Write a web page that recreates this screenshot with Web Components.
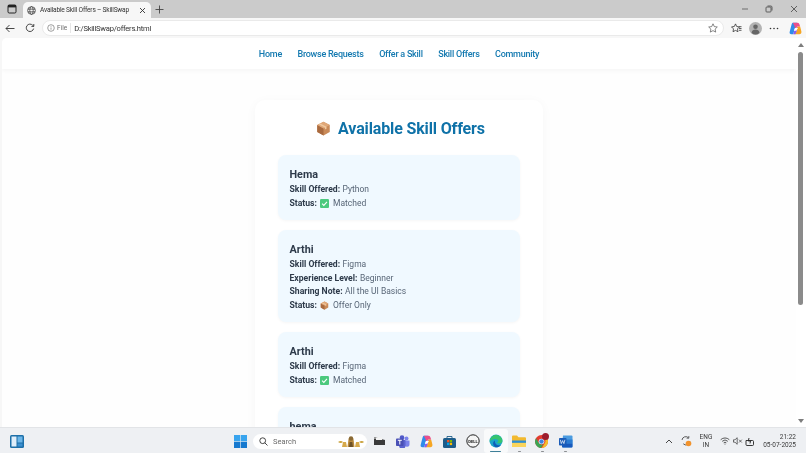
<!DOCTYPE html>
<html lang="en">
<head>
<meta charset="utf-8">
<title>Available Skill Offers – SkillSwap</title>
<style>
  html, body { margin: 0; height: 100%; overflow: hidden; }
  body { font-family: Roboto, "Noto Sans", sans-serif; background: #f8f8f8; }
  browser-window { height: 453px; filter: blur(.3px); }
</style>
</head>
<body>

<template id="tabstrip-tpl">
  <style>
    :host { display: flex; align-items: flex-end; height: 18px; background: #cbcbcb; color: #2b2b2b; font-family: Roboto, sans-serif; }
    .btn { display: flex; align-items: center; justify-content: center; align-self: stretch; }
    .tabs-btn { width: 23px; }
    .tab { display: flex; align-items: center; width: 128px; height: 16px; box-sizing: border-box; padding: 0 5px 0 3px; background: #f7f7f7; border-radius: 5px 5px 0 0; }
    .tab .globe { margin: 0 4px 0 1px; flex: none; }
    .tab span { flex: 1; font-size: 6.600px; letter-spacing: -.2px; white-space: nowrap; overflow: hidden; color: #333; }
    .plus { width: 16px; margin-left: 0; }
    .spacer { flex: 1; }
    .ctl { width: 24.500px; }
  </style>
  <div class="btn tabs-btn">
    <svg width="10" height="10" viewBox="0 0 10 10"><rect x="1" y="1" width="8" height="8" rx="1.200" fill="#cbcbcb" stroke="#222" stroke-width="1"/><rect x="1" y="1" width="8" height="2.400" fill="#222"/></svg>
  </div>
  <div class="tab">
    <svg class="globe" width="9" height="9" viewBox="0 0 10 10" fill="none" stroke="#333" stroke-width=".8"><circle cx="5" cy="5" r="4.300"/><ellipse cx="5" cy="5" rx="1.900" ry="4.300"/><path d="M.9 3.500h8.200M.9 6.500h8.200"/></svg>
    <span><slot></slot></span>
    <svg width="7" height="7" viewBox="0 0 7 7" stroke="#333" stroke-width=".9"><path d="M1 1l5 5M6 1L1 6"/></svg>
  </div>
  <div class="btn plus">
    <svg width="9" height="9" viewBox="0 0 9 9" stroke="#444" stroke-width=".9"><path d="M4.500 .5v8M.5 4.500h8"/></svg>
  </div>
  <div class="spacer"></div>
  <div class="btn ctl"><svg width="8" height="8" viewBox="0 0 8 8" stroke="#555" stroke-width=".8"><path d="M1 4h6"/></svg></div>
  <div class="btn ctl"><svg width="8" height="8" viewBox="0 0 8 8" fill="none" stroke="#444" stroke-width=".8"><rect x="1" y="2" width="5" height="5" rx=".8"/><path d="M2.500 1h3.300a1.200 1.200 0 0 1 1.200 1.200v3.300"/></svg></div>
  <div class="btn ctl"><svg width="8" height="8" viewBox="0 0 8 8" stroke="#444" stroke-width=".8"><path d="M1 1l6 6M7 1L1 7"/></svg></div>
</template>

<template id="toolbar-tpl">
  <style>
    :host { display: flex; align-items: center; height: 20px; background: #f7f7f7; font-family: Roboto, sans-serif; }
    .ic { display: flex; justify-content: center; align-items: center; flex: none; }
    .back { width: 20px; }
    .reload { width: 19px; }
    .omni { flex: none; width: 682px; height: 16px; margin-left: 3px; box-sizing: border-box; display: flex; align-items: center; padding: 0 5px 0 4px; background: #fff; border: 1px solid #eaeaea; border-radius: 8px; }
    .file { display: flex; align-items: center; gap: 2px; font-size: 6.500px; color: #6d6d6d; }
    .sep { width: 1px; height: 10px; background: #e6e6e6; margin: 0 3px 0 3px; }
    .url { flex: 1; font-size: 7.600px; letter-spacing: -.25px; color: #333; white-space: nowrap; }
    .fav { width: 25px; }
    .prof { width: 13px; }
    .more { width: 24px; }
    .cop { width: 18px; }
  </style>
  <div class="ic back"><svg width="10" height="9" viewBox="0 0 10 9" fill="none" stroke="#333" stroke-width=".9"><path d="M9.500 4.500H1M4.500 1L1 4.500 4.500 8"/></svg></div>
  <div class="ic reload"><svg width="10" height="10" viewBox="0 0 10 10" fill="none" stroke="#333" stroke-width=".9"><path d="M8.600 5.600A3.700 3.700 0 1 1 7.700 2.300L8.800 3.400M8.800 1v2.400H6.400"/></svg></div>
  <div class="omni">
    <div class="file">
      <svg width="8" height="8" viewBox="0 0 8 8" fill="none" stroke="#777" stroke-width=".7"><circle cx="4" cy="4" r="3.300"/><path d="M4 3.500v2.200M4 2.200v.7"/></svg>
      <span>File</span>
    </div>
    <div class="sep"></div>
    <div class="url"><slot></slot></div>
    <svg width="10" height="10" viewBox="0 0 10 10" fill="none" stroke="#555" stroke-width=".7"><path d="M5 .8l1.300 2.800 3 .4-2.200 2.100.6 3L5 7.600 2.300 9.100l.6-3L.7 4l3-.4z"/></svg>
  </div>
  <div class="ic fav"><svg width="11" height="10" viewBox="0 0 11 10" fill="none" stroke="#333" stroke-width=".8"><path d="M4.500 .9l1.200 2.600 2.800.4-2 2 .5 2.800L4.500 7.400 2 8.700l.5-2.800-2-2 2.800-.4z"/><path d="M8 5.500h2.500M8 7.300h2.500M8 3.700h2.500"/></svg></div>
  <div class="ic prof"><svg width="13" height="13" viewBox="0 0 13 13"><circle cx="6.500" cy="6.500" r="6.500" fill="#b3b3b3"/><circle cx="6.500" cy="4.800" r="2.300" fill="#666"/><path d="M2.500 11c.4-2.400 2-3.400 4-3.400s3.600 1 4 3.400a6.500 6.500 0 0 1-8 0z" fill="#666"/></svg></div>
  <div class="ic more"><svg width="10" height="3" viewBox="0 0 10 3" fill="#333"><circle cx="1.500" cy="1.500" r=".8"/><circle cx="5" cy="1.500" r=".8"/><circle cx="8.500" cy="1.500" r=".8"/></svg></div>
  <div class="ic cop"><copilot-mark size="13"></copilot-mark></div>
</template>

<template id="copilot-tpl">
  <style>:host { display: inline-flex; } svg { display: block; }</style>
  <svg viewBox="0 0 13 13">
    <path d="M3.800 .8H8L5.400 8.200 4.200 12.200H2.400Q.1 12.200.7 9.800L2.600 2.600Q3 .8 3.800 .8z" fill="#2f8bea"/>
    <path d="M3.800 .8h5q1.200 0 1.700 1.600l.7 2.300-2.900-.3-2.300 2.300-.4-2.500z" fill="#ec4f8b"/>
    <path d="M8.300 4.400l2.900.3 1.200 4.800q.3 2.700-2.200 2.700H5.200l2-2.300z" fill="#f6a623"/>
    <path d="M4.200 12.200l1.400-4.400 2.700-3.300-.5 4.500-1.500 3.200z" fill="#8a5cf0"/>
    <path d="M5.900 5.900h3.100L7.300 8.700H4.800z" fill="#fff"/>
  </svg>
</template>

<template id="site-nav-tpl">
  <style>
    :host { display: flex; justify-content: center; gap: 15.500px; height: 31px; align-items: center; background: #fff; box-shadow: 0 2px 4px rgba(0,0,0,.035); position: relative; font-family: Roboto, sans-serif; }
    ::slotted(a) { color: #1379b0; font-size: 9px; letter-spacing: -.25px; font-weight: 500; text-decoration: none; }
  </style>
  <slot></slot>
</template>

<template id="offer-list-tpl">
  <style>
    :host { display: block; box-sizing: border-box; width: 288px; margin: 31px auto 0; padding: 17px 23px 0; background: #fff; border-radius: 10px; box-shadow: 0 2px 12px rgba(0,0,0,.035); }
    h1 { display: flex; justify-content: center; align-items: center; gap: 7px; margin: 0 0 16px; padding-left: 3px; height: 22px; font-size: 16px; letter-spacing: -.14px; font-weight: 700; color: #0f72a8; white-space: nowrap; }
    .cards { display: flex; flex-direction: column; gap: 10px; }
  </style>
  <h1><skill-icon kind="box" size="15"></skill-icon><span><slot name="title"></slot></span></h1>
  <div class="cards"><slot></slot></div>
</template>

<template id="offer-card-tpl">
  <style>
    :host { display: block; padding: 11.500px 12px 10px 11.500px; background: #f0f9ff; border-radius: 8px; box-shadow: 0 1px 3px rgba(0,0,0,.04); font-family: Roboto, sans-serif; color: #586677; font-size: 8.500px; line-height: 13.500px; }
    h3 { margin: 0 0 1.500px; font-size: 10.800px; line-height: 15px; font-weight: 700; color: #2d3a4a; }
  </style>
  <h3></h3>
  <slot></slot>
</template>

<template id="offer-field-tpl">
  <style>
    :host { display: flex; align-items: center; height: 13.500px; white-space: nowrap; }
    b { color: #2d3a4a; font-size: 8.650px; font-weight: 700; margin-right: 2.500px; }
    ::slotted(skill-icon) { margin: 0 4px 0 .5px; }
  </style>
  <b></b><slot></slot>
</template>

<template id="taskbar-tpl">
  <style>
    :host { display: grid; grid-template-columns: 1fr auto 1fr; align-items: center; height: 26px; padding-top: 1px; background: #eef0f3; border-top: 1px solid #e2e4e7; box-sizing: border-box; font-family: Roboto, sans-serif; }
    .left { padding-left: 10px; display: flex; }
    .mid { display: flex; align-items: center; }
    .right { justify-self: end; }
    .s { width: 23.250px; height: 24px; display: flex; justify-content: center; align-items: center; position: relative; flex: none; box-sizing: border-box; }
    .s.active { background: #f9fafb; border-radius: 3px; }
    .s.active::after { content: ""; position: absolute; bottom: 1px; left: 6px; width: 11px; height: 1.500px; background: #3e7f98; border-radius: 1px; }
    .s.open::after { content: ""; position: absolute; bottom: 1px; left: 10px; width: 3px; height: 1.500px; background: #8d8f92; border-radius: 1px; }
    .search { width: 114px; height: 15px; margin: 0 1px; box-sizing: border-box; display: flex; align-items: center; gap: 5px; padding: 0 2px 0 6px; border-radius: 8px; background: #fff; color: #6b6b6b; font-size: 7.500px; flex: none; }
    .search span { flex: 1; }
  </style>
  <div class="left">
    <svg width="14" height="13" viewBox="0 0 14 13"><rect width="14" height="13" rx="1.500" fill="#1d6fa8"/><rect x="1.500" y="1.500" width="5" height="10" fill="#dfeefa"/><rect x="7.500" y="1.500" width="5" height="6" fill="#6db6e8"/><rect x="7.500" y="8.500" width="5" height="3" fill="#3b8fd0"/></svg>
  </div>
  <div class="mid">
    <div class="s"><svg width="13" height="13" viewBox="0 0 13 13"><rect width="6.200" height="6.200" fill="#38a4ee"/><rect x="6.800" width="6.200" height="6.200" fill="#38a4ee"/><rect y="6.800" width="6.200" height="6.200" fill="#1679cf"/><rect x="6.800" y="6.800" width="6.200" height="6.200" fill="#1679cf"/></svg></div>
    <div class="search">
      <svg width="9" height="9" viewBox="0 0 9 9" fill="none" stroke="#333" stroke-width=".9"><circle cx="3.700" cy="3.700" r="2.900"/><path d="M5.800 5.800l2.700 2.700"/></svg>
      <span>Search</span>
      <svg width="28" height="13" viewBox="0 0 28 13">
        <path d="M1 7q3-2 5 0-2 2-5 0zM22 7q3-2 5 0-2 2-5 0z" fill="#c9a13a"/>
        <path d="M5 12l1-5h3l1 5zM18 12l1-5h3l1 5z" fill="#d6a94a"/>
        <path d="M10.500 12l1-8q2.500-4 5 0l1 8z" fill="#b98a3c"/>
        <circle cx="14" cy="3.500" r="2.200" fill="#8a6a35"/>
        <path d="M12 12l.7-5h2.600l.7 5z" fill="#6e5228"/>
      </svg>
    </div>
    <div class="s"><svg width="11" height="10" viewBox="0 0 11 10"><path d="M0 3h7l4 1v5H0z" fill="#3a3a3a"/><path d="M0 1h3l1 2H0z" fill="#9a9a9a"/><rect x="2" y="1.500" width="6" height="2.500" fill="#f3f3f3"/></svg></div>
    <div class="s"><svg width="14" height="13" viewBox="0 0 14 13"><circle cx="10.500" cy="3.500" r="2" fill="#7b83eb"/><circle cx="6" cy="2.600" r="2.300" fill="#5059c9"/><path d="M8 5.500h5.500v3.500a2.500 2.500 0 0 1-5 .5z" fill="#7b83eb"/><path d="M2.500 5h7v5.500a3.200 3.200 0 0 1-6.400.2z" fill="#5b63cf"/><rect y="3.500" width="7.500" height="7.500" rx=".8" fill="#4a50b5"/><path d="M1.800 5.300h4M3.800 5.300v4.200" stroke="#fff" stroke-width="1" fill="none"/></svg></div>
    <div class="s"><copilot-mark size="13"></copilot-mark></div>
    <div class="s"><svg width="13" height="13" viewBox="0 0 13 13"><path d="M4 3V1.500h5V3" fill="none" stroke="#1e5f8a" stroke-width=".9"/><rect y="3" width="13" height="10" rx="1.500" fill="#1d5c8a"/><rect x="4" y="5" width="2.300" height="2.300" fill="#f25022"/><rect x="6.800" y="5" width="2.300" height="2.300" fill="#7fba00"/><rect x="4" y="7.800" width="2.300" height="2.300" fill="#00a4ef"/><rect x="6.800" y="7.800" width="2.300" height="2.300" fill="#ffb900"/></svg></div>
    <div class="s"><svg width="14" height="14" viewBox="0 0 14 14"><circle cx="7" cy="7" r="6.200" fill="#f4f4f4" stroke="#222" stroke-width="1"/><text x="7" y="8.500" text-anchor="middle" font-size="4.200" font-weight="700" fill="#222" font-family="Roboto, sans-serif">DELL</text></svg></div>
    <div class="s active"><svg width="14" height="14" viewBox="0 0 14 14"><circle cx="7" cy="7" r="6.500" fill="#1aa5c9"/><path d="M.6 7.800C1 3.500 4 1 7 1c3.500 0 6.300 2.500 6.400 6 0 1.500-1.400 2.300-3.200 2.300-1.300 0-2-.4-2.200-.9 1.500-.3 1.700-1.700.4-2.800C6.500 4.300 3.200 4.600.6 7.800z" fill="#36c46f"/><path d="M6 12.900C3.500 11 3.500 7.500 6 6.500c-.7 2.800 1.700 5.500 5.800 4.700C10 13.200 8 13.600 6 12.900z" fill="#0d5fb8"/></svg></div>
    <div class="s open"><svg width="14" height="12" viewBox="0 0 14 12"><path d="M0 1.500A1 1 0 0 1 1 .5h4l1.500 1.700H13a1 1 0 0 1 1 1V11a1 1 0 0 1-1 1H1a1 1 0 0 1-1-1z" fill="#f2b92f"/><rect y="5.500" width="14" height="2.400" fill="#2a8fd8"/><rect y="7.900" width="14" height="4.100" fill="#fad45b"/></svg></div>
    <div class="s open"><svg width="16" height="16" viewBox="0 0 16 16"><circle cx="7.500" cy="8.500" r="6.500" fill="#e33b2e"/><path d="M13.400 5.700A6.500 6.500 0 0 1 7.800 15l3-5a3.300 3.300 0 0 0-.5-4.300z" fill="#f6c029"/><path d="M7 15A6.500 6.500 0 0 1 2 5.200l3 5.100A3.300 3.300 0 0 0 9.300 11z" fill="#3aa655"/><circle cx="7.500" cy="8.500" r="2.800" fill="#fff"/><circle cx="7.500" cy="8.500" r="2.200" fill="#3b82e0"/><circle cx="11.500" cy="3.500" r="3.500" fill="#9c1c2e"/></svg></div>
    <div class="s open"><svg width="14" height="13" viewBox="0 0 14 13"><path d="M4 .5h8.500a1 1 0 0 1 1 1v10a1 1 0 0 1-1 1H4a1 1 0 0 1-1-1z" fill="#4a9be0"/><path d="M3 4.500h10.500v4H3z" fill="#2b7cd3"/><path d="M3 8.500h10.500v3a1 1 0 0 1-1 1H4a1 1 0 0 1-1-1z" fill="#185abd"/><rect y="3" width="7.500" height="7.500" rx=".8" fill="#1a5cb8"/><path d="M1.300 4.800l1 3.800 1.300-3 1.300 3 1-3.800" fill="none" stroke="#fff" stroke-width=".7"/></svg></div>
  </div>
  <div class="right"><slot></slot></div>
</template>

<template id="system-tray-tpl">
  <style>
    :host { display: flex; align-items: center; padding-right: 10px; color: #3a3a3a; font-family: Roboto, sans-serif; font-size: 6.500px; line-height: 8.500px; }
    .i { display: flex; justify-content: center; align-items: center; flex: none; }
    .lang { text-align: center; width: 20px; margin: 0 2px 0 0; }
    .clock { text-align: right; width: 36px; margin-left: 4px; }
  </style>
  <div class="i" style="width:17px"><svg width="8" height="5" viewBox="0 0 8 5" fill="none" stroke="#333" stroke-width=".9"><path d="M1 4l3-3 3 3"/></svg></div>
  <div class="i" style="width:17px;margin-right:2px"><svg width="12" height="12" viewBox="0 0 12 12" fill="none"><path d="M2 5a3.800 3.800 0 0 1 6.500-2.200M9.800 6A3.800 3.800 0 0 1 3.300 8.800" stroke="#4a4a4a" stroke-width=".9"/><path d="M8.800 1v2.200H6.600" stroke="#4a4a4a" stroke-width=".8"/><circle cx="8.500" cy="8.500" r="2.800" fill="#f2932c"/></svg></div>
  <div class="lang">ENG<br>IN</div>
  <div class="i" style="width:13px"><svg width="10" height="8" viewBox="0 0 10 8" fill="none" stroke="#333" stroke-width=".8"><path d="M.7 2.700a6.200 6.200 0 0 1 8.600 0M2.200 4.300a4 4 0 0 1 5.600 0M3.700 5.800a1.900 1.900 0 0 1 2.600 0"/><circle cx="5" cy="7.100" r=".5" fill="#333" stroke="none"/></svg></div>
  <div class="i" style="width:13px"><svg width="10" height="8" viewBox="0 0 10 8"><path d="M.5 2.800h1.500L4.200.7v6.600L2 5.200H.5z" fill="none" stroke="#333" stroke-width=".7"/><path d="M6 2.700l2.800 2.800M8.800 2.700L6 5.500" stroke="#333" stroke-width=".7"/></svg></div>
  <div class="i" style="width:12px"><svg width="10" height="9" viewBox="0 0 10 9"><path d="M1 3.500h6.500a1 1 0 0 1 1 1v3a1 1 0 0 1-1 1H2a1 1 0 0 1-1-1z" fill="none" stroke="#222" stroke-width=".9"/><path d="M4 1l-.7 3h2.200L5 6.500" fill="none" stroke="#222" stroke-width=".9"/></svg></div>
  <div class="clock"><slot></slot></div>
</template>

<browser-window>
  <tab-strip slot="chrome">Available Skill Offers – SkillSwap</tab-strip>
  <url-toolbar slot="chrome">D:/SkillSwap/offers.html</url-toolbar>

  <site-nav>
    <a href="#">Home</a>
    <a href="#">Browse Requests</a>
    <a href="#">Offer a Skill</a>
    <a href="#">Skill Offers</a>
    <a href="#">Community</a>
  </site-nav>

  <offer-list>
    <span slot="title">Available Skill Offers</span>

    <offer-card name="Hema">
      <offer-field label="Skill Offered:">Python</offer-field>
      <offer-field label="Status:"><skill-icon kind="check" size="9"></skill-icon>Matched</offer-field>
    </offer-card>

    <offer-card name="Arthi">
      <offer-field label="Skill Offered:">Figma</offer-field>
      <offer-field label="Experience Level:">Beginner</offer-field>
      <offer-field label="Sharing Note:">All the UI Basics</offer-field>
      <offer-field label="Status:"><skill-icon kind="box" size="9"></skill-icon>Offer Only</offer-field>
    </offer-card>

    <offer-card name="Arthi">
      <offer-field label="Skill Offered:">Figma</offer-field>
      <offer-field label="Status:"><skill-icon kind="check" size="9"></skill-icon>Matched</offer-field>
    </offer-card>

    <offer-card name="hema"></offer-card>
  </offer-list>

  <task-bar slot="taskbar">
    <system-tray>21:22<br>05-07-2025</system-tray>
  </task-bar>
</browser-window>

<script>
// small helper, every element here just clones its template
function shadowFrom(el, id) {
  const root = el.attachShadow({mode: 'open'});
  root.appendChild(document.getElementById(id).content.cloneNode(true));
  return root;
}

class BrowserWindow extends HTMLElement {
  constructor() {
    super();
    this.attachShadow({mode: 'open'}).innerHTML = `
      <style>
        :host { display: flex; flex-direction: column; overflow: hidden; background: #f7f7f7; }
        .view { flex: 1; min-height: 0; display: flex; padding-left: 2px; }
        .page { flex: 1; min-width: 0; overflow: hidden; background: #fefefe; border-radius: 5px 0 0 0; }
        .bar { width: 10px; flex: none; background: #fff; display: flex; flex-direction: column; align-items: center; justify-content: space-between; position: relative; padding: 5px 0 4px; box-sizing: border-box; }
        .thumb { position: absolute; top: 14px; left: 2px; width: 5px; height: 253px; background: #8b8b8b; border-radius: 3px; }
        .arrow { width: 0; height: 0; border-left: 3px solid transparent; border-right: 3px solid transparent; }
        .up { border-bottom: 4px solid #7d7d7d; }
        .down { border-top: 4px solid #7d7d7d; }
      </style>
      <slot name="chrome"></slot>
      <div class="view">
        <div class="page"><slot></slot></div>
        <div class="bar"><i class="arrow up"></i><i class="thumb"></i><i class="arrow down"></i></div>
      </div>
      <slot name="taskbar"></slot>`;
  }
}

class TabStrip extends HTMLElement {
  constructor() { super(); shadowFrom(this, 'tabstrip-tpl'); }
}
class UrlToolbar extends HTMLElement {
  constructor() { super(); shadowFrom(this, 'toolbar-tpl'); }
}
class CopilotMark extends HTMLElement {
  constructor() { super(); shadowFrom(this, 'copilot-tpl'); }
  connectedCallback() {
    const s = this.getAttribute('size') || 13;
    const svg = this.shadowRoot.querySelector('svg');
    svg.setAttribute('width', s);
    svg.setAttribute('height', s);
  }
}
class SiteNav extends HTMLElement {
  constructor() { super(); shadowFrom(this, 'site-nav-tpl'); }
}
class OfferList extends HTMLElement {
  constructor() { super(); shadowFrom(this, 'offer-list-tpl'); }
}
class OfferCard extends HTMLElement {
  constructor() { super(); shadowFrom(this, 'offer-card-tpl'); }
  connectedCallback() {
    this.shadowRoot.querySelector('h3').textContent = this.getAttribute('name');
  }
}
class OfferField extends HTMLElement {
  constructor() { super(); shadowFrom(this, 'offer-field-tpl'); }
  connectedCallback() {
    this.shadowRoot.querySelector('b').textContent = this.getAttribute('label');
  }
}
class TaskBar extends HTMLElement {
  constructor() { super(); shadowFrom(this, 'taskbar-tpl'); }
}
class SystemTray extends HTMLElement {
  constructor() { super(); shadowFrom(this, 'system-tray-tpl'); }
}

class SkillIcon extends HTMLElement {
  constructor() {
    super();
    this.attachShadow({mode: 'open'});
  }
  connectedCallback() {
    const s = this.getAttribute('size') || 12;
    const art = {
      check: `<rect width="12" height="12" rx="1.500" fill="#4cc97e"/><path d="M2.800 6.300l2.300 2.300 4.200-4.800" fill="none" stroke="#fff" stroke-width="1.400"/>`,
      box: `<path d="M6 .5l5 2.700v5.600L6 11.500 1 8.800V3.200z" fill="#c98a58"/><path d="M6 6v5.500L1 8.800V3.200z" fill="#a96a3f"/><path d="M1 3.200L6 .5l5 2.700L6 6z" fill="#e0a878"/><path d="M3.400 1.900l5 2.700v1.600l-1.300.6V5.200l-5-2.600z" fill="#f0c9a0"/>`
    };
    this.shadowRoot.innerHTML = `
      <style>:host { display: inline-flex; flex: none; } svg { display: block; }</style>
      <svg width="${s}" height="${s}" viewBox="0 0 12 12">${art[this.getAttribute('kind')]}</svg>`;
  }
}

customElements.define('browser-window', BrowserWindow);
customElements.define('tab-strip', TabStrip);
customElements.define('url-toolbar', UrlToolbar);
customElements.define('copilot-mark', CopilotMark);
customElements.define('site-nav', SiteNav);
customElements.define('offer-list', OfferList);
customElements.define('offer-card', OfferCard);
customElements.define('offer-field', OfferField);
customElements.define('skill-icon', SkillIcon);
customElements.define('task-bar', TaskBar);
customElements.define('system-tray', SystemTray);
</script>
</body>
</html>
